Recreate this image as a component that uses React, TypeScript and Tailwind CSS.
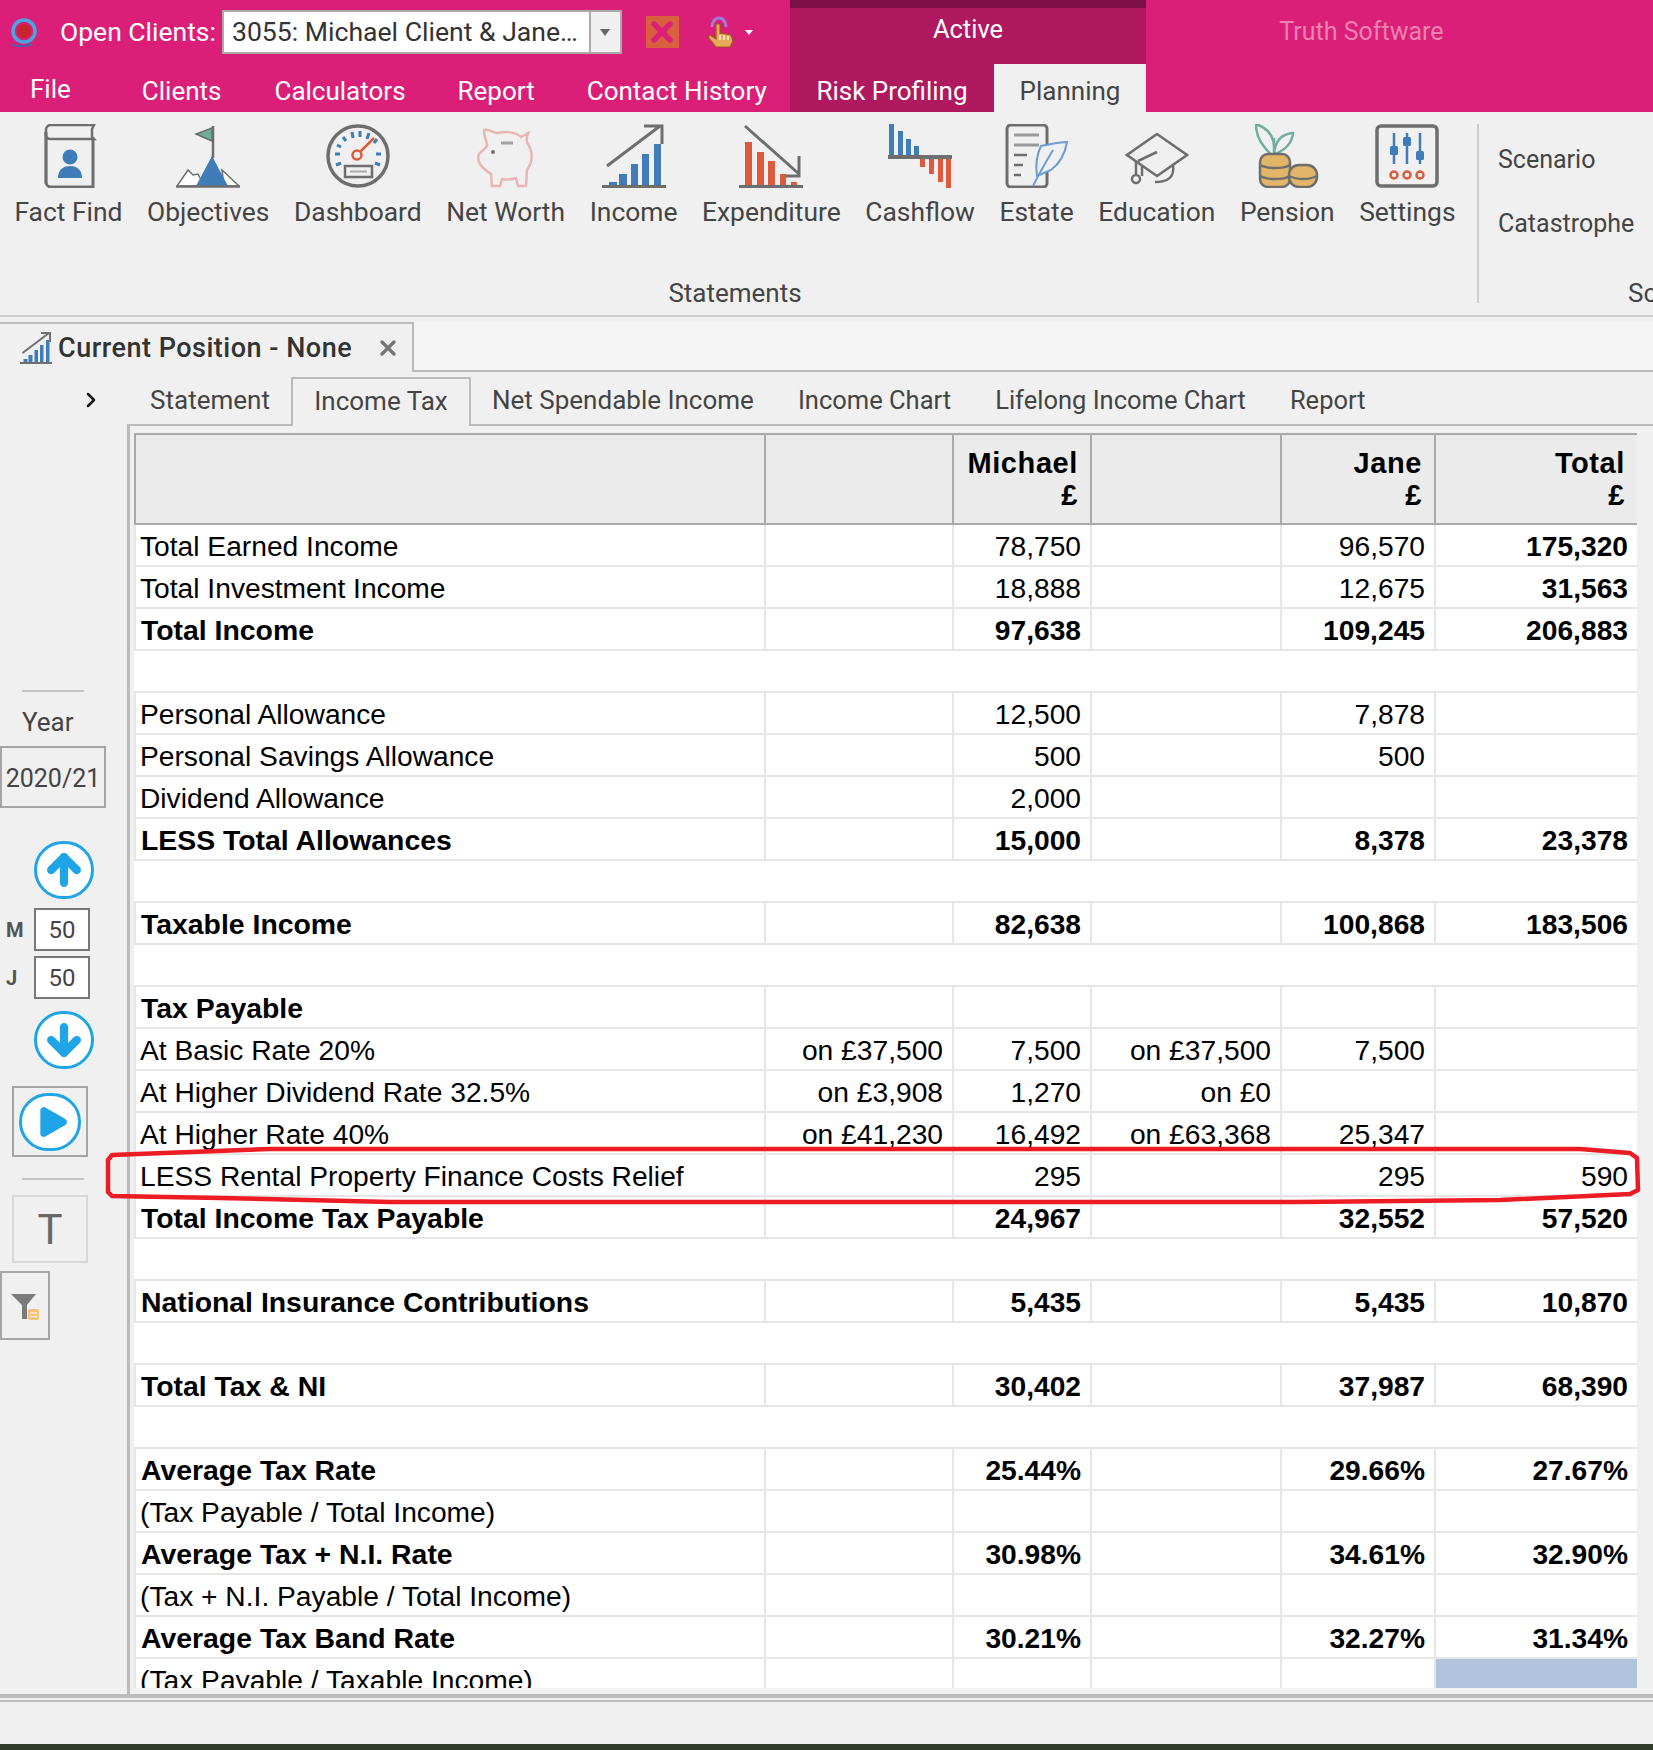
import { ArrowUp, ArrowDown, Play, X, ChevronRight } from "lucide-react";

const GRAY = "#6e6e6e";
const BLUE = "#3f7cb8";
const ORANGE = "#dd5b3c";
const TEAL = "#6fae9d";
const GOLD = "#e2b568";
const PINK = "#e8b6b4";

const FactFindIcon = () => (
  <svg width="64" height="64" viewBox="0 0 64 64" fill="none">
    <path d="M10 60 V6 a5 5 0 0 1 5 -5 H58 L56 5 V13 L58 15 H15 a5 5 0 0 1 -5 -7" stroke={GRAY} strokeWidth="2.5" />
    <path d="M57 14 V63 H15 a5 5 0 0 1 -5 -5 V8" stroke={GRAY} strokeWidth="3" />
    <circle cx="34" cy="33" r="7.5" fill={BLUE} />
    <path d="M22 54 C22 45 28 42 34 42 C40 42 46 45 46 54 Z" fill={BLUE} />
  </svg>
);

const ObjectivesIcon = () => (
  <svg width="64" height="64" viewBox="0 0 64 64" fill="none">
    <path d="M37 2 V34" stroke={GRAY} strokeWidth="2.5" />
    <path d="M36 4 L20 10 L36 17 Z" fill={TEAL} stroke={GRAY} strokeWidth="1.5" />
    <path d="M12 46 L1 62 H28 L22 50 L17 51 Z" fill="#fff" stroke={GRAY} strokeWidth="1.5" />
    <path d="M46 46 L63 62 H48 Z" fill="#fff" stroke={GRAY} strokeWidth="1.5" />
    <path d="M36 32 L20 62 H52 Z" fill={BLUE} />
    <path d="M0 62.5 H64" stroke={GRAY} strokeWidth="2.5" />
  </svg>
);

const DashboardIcon = () => (
  <svg width="64" height="64" viewBox="0 0 64 64" fill="none">
    <circle cx="32" cy="32" r="30" stroke={GRAY} strokeWidth="3.5" />
    <path d="M9 30 H14 M10 41 L15 39 M11 21 L15 23 M17 13 L20 17 M26 8 L27 14 M34 7 V13 M43 9 L41 15 M51 15 L48 19 M55 30 H50 M54 41 L49 39" stroke={BLUE} strokeWidth="3" />
    <circle cx="31" cy="31" r="4.5" stroke={ORANGE} strokeWidth="2.5" />
    <path d="M34 28 L48 14" stroke={ORANGE} strokeWidth="2.5" />
    <rect x="19" y="42" width="27" height="11" stroke={GRAY} strokeWidth="2.5" />
    <path d="M24 47.5 H41" stroke="#aaa" strokeWidth="2" />
  </svg>
);

const NetWorthIcon = () => (
  <svg width="64" height="64" viewBox="0 0 64 64" fill="none" stroke={PINK} strokeWidth="2.5">
    <path d="M10 6 C16 4 20 10 24 9 C32 7 42 8 47 13 L54 9 C52 14 53 18 53 18 C58 26 60 36 53 46 L52 62 H44 L42 54 C36 56 32 56 28 55 L26 62 H18 L17 50 C8 44 2 38 5 30 C8 26 14 24 13 20 C12 16 10 12 10 6 Z" />
    <path d="M27 19 H39" stroke={GRAY} strokeWidth="3" opacity="0.6" />
    <circle cx="19" cy="28" r="2" fill={GRAY} stroke="none" />
  </svg>
);

const IncomeIcon = () => (
  <svg width="64" height="64" viewBox="0 0 64 64" fill="none">
    <path d="M5 42 L58 2 M42 2 H60 V20" stroke={GRAY} strokeWidth="3" />
    <path d="M7 63 H15 V58 H7 Z M17 63 H25 V50 H17 Z M29 63 H36 V40 H29 Z M40 63 H47 V30 H40 Z M52 63 H59 V20 H52 Z" fill={BLUE} />
    <path d="M0 63 H64" stroke={GRAY} strokeWidth="4" />
  </svg>
);

const ExpenditureIcon = () => (
  <svg width="64" height="64" viewBox="0 0 64 64" fill="none">
    <path d="M6 2 L60 50 M60 32 V52 H42" stroke={GRAY} strokeWidth="3" />
    <path d="M6 63 H13 V18 H6 Z M18 63 H25 V28 H18 Z M29 63 H36 V37 H29 Z M41 63 H47 V50 H41 Z M52 63 H58 V58 H52 Z" fill={ORANGE} />
    <path d="M0 63 H64" stroke={GRAY} strokeWidth="4" />
  </svg>
);

const CashflowIcon = () => (
  <svg width="64" height="64" viewBox="0 0 64 64" fill="none">
    <path d="M1 0 H6 V31 H1 Z M10 7 H15 V31 H10 Z M18 15 H23 V31 H18 Z M26 22 H31 V31 H26 Z" fill={BLUE} />
    <path d="M32 35 H37 V43 H32 Z M41 35 H46 V50 H41 Z M50 35 H55 V58 H50 Z M58 35 H63 V64 H58 Z" fill={ORANGE} />
    <path d="M0 33 H64" stroke={GRAY} strokeWidth="4" />
  </svg>
);

const EstateIcon = () => (
  <svg width="64" height="64" viewBox="0 0 64 64" fill="none">
    <rect x="2" y="1" width="40" height="62" rx="4" stroke={GRAY} strokeWidth="3" />
    <path d="M9 11 H34 M9 21 H34" stroke="#9a9a9a" strokeWidth="3" />
    <path d="M9 31 H22 M9 41 H18 M9 51 H16" stroke={GRAY} strokeWidth="2.5" />
    <path d="M36 22 C46 20 54 18 62 18 C60 30 54 40 46 46 L32 52 C30 38 32 30 36 22 Z" fill="#f0f0f0" stroke="#6a9dd2" strokeWidth="2" />
    <path d="M28 62 C34 50 42 36 48 26" stroke="#6a9dd2" strokeWidth="2" />
  </svg>
);

const EducationIcon = () => (
  <svg width="64" height="64" viewBox="0 0 64 64" fill="none" stroke={GRAY} strokeWidth="2.5">
    <path d="M32 10 L62 31 L32 52 L2 31 Z" />
    <path d="M11 37 V50" />
    <circle cx="11" cy="55" r="4" />
    <path d="M32 28 L13 37 M17 42 V52 M48 41 C50 54 42 58 30 58" />
  </svg>
);

const PensionIcon = () => (
  <svg width="64" height="64" viewBox="0 0 64 64" fill="none">
    <path d="M19 34 V14 M19 34 C10 24 1 16 1 0 C12 4 20 12 19 26 M19 30 C20 18 26 10 38 9 C37 20 30 26 20 30" stroke={TEAL} strokeWidth="2.5" />
    <rect x="5" y="30" width="30" height="33" rx="8" fill={GOLD} stroke={GRAY} strokeWidth="2.5" />
    <path d="M5 41 C12 45 28 45 35 41 M5 52 C12 56 28 56 35 52" stroke={GRAY} strokeWidth="2.5" />
    <rect x="34" y="41" width="28" height="22" rx="10" fill={GOLD} stroke={GRAY} strokeWidth="2.5" />
    <path d="M34 52 C42 56 54 56 62 52" stroke={GRAY} strokeWidth="2.5" />
  </svg>
);

const SettingsIcon = () => (
  <svg width="64" height="64" viewBox="0 0 64 64" fill="none">
    <rect x="2" y="2" width="60" height="60" rx="4" stroke={GRAY} strokeWidth="3.5" />
    <path d="M19 9 V40 M32 9 V40 M45 9 V40" stroke={BLUE} strokeWidth="2.5" />
    <rect x="15" y="22" width="8" height="9" rx="1.5" fill={BLUE} />
    <rect x="28" y="13" width="8" height="9" rx="1.5" fill={BLUE} />
    <rect x="41" y="27" width="8" height="9" rx="1.5" fill={BLUE} />
    <circle cx="19" cy="51" r="3.5" stroke={ORANGE} strokeWidth="2.5" />
    <circle cx="32" cy="51" r="3.5" stroke={ORANGE} strokeWidth="2.5" />
    <circle cx="45" cy="51" r="3.5" stroke={ORANGE} strokeWidth="2.5" />
  </svg>
);

const ribbonItems = [
  { label: "Fact Find", icon: <FactFindIcon /> },
  { label: "Objectives", icon: <ObjectivesIcon /> },
  { label: "Dashboard", icon: <DashboardIcon /> },
  { label: "Net Worth", icon: <NetWorthIcon /> },
  { label: "Income", icon: <IncomeIcon /> },
  { label: "Expenditure", icon: <ExpenditureIcon /> },
  { label: "Cashflow", icon: <CashflowIcon /> },
  { label: "Estate", icon: <EstateIcon /> },
  { label: "Education", icon: <EducationIcon /> },
  { label: "Pension", icon: <PensionIcon /> },
  { label: "Settings", icon: <SettingsIcon /> },
];

type Row = {
  label?: string;
  bold?: boolean;
  onM?: string;
  m?: string;
  onJ?: string;
  j?: string;
  total?: string;
};

const rows: Row[] = [
  { label: "Total Earned Income", m: "78,750", j: "96,570", total: "175,320" },
  { label: "Total Investment Income", m: "18,888", j: "12,675", total: "31,563" },
  { label: "Total Income", bold: true, m: "97,638", j: "109,245", total: "206,883" },
  {},
  { label: "Personal Allowance", m: "12,500", j: "7,878" },
  { label: "Personal Savings Allowance", m: "500", j: "500" },
  { label: "Dividend Allowance", m: "2,000" },
  { label: "LESS Total Allowances", bold: true, m: "15,000", j: "8,378", total: "23,378" },
  {},
  { label: "Taxable Income", bold: true, m: "82,638", j: "100,868", total: "183,506" },
  {},
  { label: "Tax Payable", bold: true },
  { label: "At Basic Rate 20%", onM: "on £37,500", m: "7,500", onJ: "on £37,500", j: "7,500" },
  { label: "At Higher Dividend Rate 32.5%", onM: "on £3,908", m: "1,270", onJ: "on £0" },
  { label: "At Higher Rate 40%", onM: "on £41,230", m: "16,492", onJ: "on £63,368", j: "25,347" },
  { label: "LESS Rental Property Finance Costs Relief", m: "295", j: "295" },
  { label: "Total Income Tax Payable", bold: true, m: "24,967", j: "32,552", total: "57,520" },
  {},
  { label: "National Insurance Contributions", bold: true, m: "5,435", j: "5,435", total: "10,870" },
  {},
  { label: "Total Tax & NI", bold: true, m: "30,402", j: "37,987", total: "68,390" },
  {},
  { label: "Average Tax Rate", bold: true, m: "25.44%", j: "29.66%", total: "27.67%" },
  { label: "(Tax Payable / Total Income)" },
  { label: "Average Tax + N.I. Rate", bold: true, m: "30.98%", j: "34.61%", total: "32.90%" },
  { label: "(Tax + N.I. Payable / Total Income)" },
  { label: "Average Tax Band Rate", bold: true, m: "30.21%", j: "32.27%", total: "31.34%" },
  { label: "(Tax Payable / Taxable Income)" },
];

const cellCls = "border-2 border-[#e6e6e6] pt-[2px] pr-[9px] text-right";

const App = () => {
  return (
    <div className="relative flex h-[1750px] w-[1653px] flex-col overflow-hidden bg-[#f0f0f0] font-['Roboto',sans-serif] text-[#444]">
      {/* Title bar + menu */}
      <header className="flex h-[112px] shrink-0 bg-[#db1f78] text-[26px] text-white">
        <div className="w-[790px] shrink-0">
          <div className="flex h-[64px] items-center pl-[8px]">
            <svg width="30" height="30" viewBox="0 0 30 30" fill="none">
              <path d="M3 27 C8 30 18 30 24 27" stroke="#4a5fb0" strokeWidth="2" />
              <circle cx="16" cy="14" r="11" stroke="#4aa8e0" strokeWidth="3.5" />
              <circle cx="16" cy="14" r="7" fill="#c9252e" />
            </svg>
            <span className="ml-[22px] text-[26.5px]">Open Clients:</span>
            <div className="ml-[6px] flex h-[44px] w-[400px] items-center border-2 border-[#aaa] bg-white text-[#333]">
              <span className="flex-1 pl-[8px] text-[26.6px] whitespace-nowrap">3055: Michael Client &amp; Jane…</span>
              <div className="flex h-full w-[31px] shrink-0 items-center justify-center border-l-2 border-[#aaa] bg-[#f0f0f0]">
                <div className="h-0 w-0 border-x-[5px] border-t-[7px] border-x-transparent border-t-[#666]" />
              </div>
            </div>
            <div className="ml-[24px] flex h-[32px] w-[33px] items-center justify-center bg-[#d9603e]">
              <X size={32} strokeWidth={4} className="text-[#db1f78]" />
            </div>
            <svg className="ml-[26px]" width="30" height="34" viewBox="0 0 30 34" fill="none">
              <path d="M7 12 a7 9 0 0 1 14 0" stroke="#a07fd8" strokeWidth="3" />
              <path d="M11 9 H15 V18 L26 20 L28 26 L25 32 H11 L3 22 L5 20 L11 24 Z" fill="#e6a85a" stroke="#9a5a20" strokeWidth="1.2" />
              <path d="M15 20 V25 M19 20 V25 M23 21 V25" stroke="#fff3d8" strokeWidth="1.4" />
            </svg>
            <div className="ml-[10px] h-0 w-0 border-x-[4px] border-t-[5px] border-x-transparent border-t-white" />
          </div>
          <nav className="flex h-[48px] items-center pl-[30px] pt-[6px] text-[26px]">
            <span className="mr-[71px] -mt-[4px]">File</span>
            <span className="mr-[53px]">Clients</span>
            <span className="mr-[52px]">Calculators</span>
            <span className="mr-[52px]">Report</span>
            <span>Contact History</span>
          </nav>
        </div>
        <div className="flex w-[356px] shrink-0 flex-col bg-[#b01860]">
          <div className="h-[8px] bg-[#7d1046]" />
          <div className="flex h-[56px] items-center justify-center pb-[14px] text-[25.5px]">Active</div>
          <div className="flex h-[48px]">
            <div className="flex flex-1 items-center justify-center pt-[6px] text-[26px]">Risk Profiling</div>
            <div className="flex w-[152px] items-center justify-center bg-[#f0f0f0] pt-[6px] text-[#444]">Planning</div>
          </div>
        </div>
        <div className="flex h-[64px] flex-1 items-center justify-center pr-[76px] text-[25px] text-[#ee82b4]">Truth Software</div>
      </header>

      {/* Ribbon */}
      <section className="flex h-[205px] shrink-0 border-b-2 border-[#cdcdcd]">
        <div className="flex w-[1477px] shrink-0 flex-col items-center pr-[7px]">
          <div className="flex gap-[24.6px] pt-[12px] text-[26.4px]">
            {ribbonItems.map((item) => (
              <div key={item.label} className="flex flex-col items-center">
                {item.icon}
                <span className="mt-[8px] leading-[32px]">{item.label}</span>
              </div>
            ))}
          </div>
          <div className="mt-[49px] text-[26px] leading-[32px]">Statements</div>
        </div>
        <div className="mt-[12px] mb-[12px] flex-1 overflow-hidden border-l-2 border-[#cdcdcd] pl-[19px] text-[25px]">
          <div className="mt-[20px] leading-[32px]">Scenario</div>
          <div className="mt-[32px] leading-[32px]">Catastrophe</div>
          <div className="mt-[37px] whitespace-nowrap pl-[130px] text-[26px] leading-[32px]">Scenarios</div>
        </div>
      </section>

      {/* Document tab */}
      <div className="mt-[5px] flex h-[50px] shrink-0">
        <div className="flex w-[414px] items-center border-t-2 border-r-2 border-[#bbb] pl-[20px] text-[27px] font-medium tracking-[0.5px] text-[#333]">
          <svg width="32" height="32" viewBox="0 0 64 64" fill="none">
            <path d="M5 42 L58 2 M42 2 H60 V20" stroke={GRAY} strokeWidth="4" />
            <path d="M7 60 H15 V54 H7 Z M17 60 H25 V46 H17 Z M29 60 H36 V36 H29 Z M40 60 H47 V26 H40 Z M52 60 H59 V16 H52 Z" fill={BLUE} />
            <path d="M0 62 H64" stroke={GRAY} strokeWidth="4" />
          </svg>
          <span className="ml-[6px] whitespace-nowrap">Current Position - None</span>
          <X size={24} strokeWidth={3.5} className="ml-[24px] shrink-0 text-[#777]" />
        </div>
        <div className="flex-1 border-b-2 border-[#bbb] bg-[#f5f5f5]" />
      </div>

      {/* Sub tabs */}
      <div className="flex h-[54px] shrink-0 pt-[5px] text-[26px]">
        <div className="flex w-[127px] items-center justify-end pr-[24px] pb-[4px]">
          <ChevronRight size={24} strokeWidth={2.5} className="text-[#111]" />
        </div>
        <div className="flex w-[164px] items-center justify-center border-b-2 border-[#bbb] pl-[2px]">Statement</div>
        <div className="flex w-[180px] items-center justify-center border-x-2 border-t-2 border-[#bbb] pb-[2px]">Income Tax</div>
        <div className="flex flex-1 items-center gap-[44px] border-b-2 border-[#bbb] pl-[21px] text-[25.5px]">
          <span className="text-[26px]">Net Spendable Income</span>
          <span>Income Chart</span>
          <span>Lifelong Income Chart</span>
          <span>Report</span>
        </div>
      </div>

      {/* Body */}
      <div className="flex min-h-0 flex-1">
        <aside className="flex h-[1269px] w-[130px] shrink-0 flex-col border-r-[3px] border-[#bbb]">
          <div className="mt-[264px] ml-[22px] h-[2px] w-[62px] bg-[#c4c4c4]" />
          <div className="mt-[14px] pl-[22px] text-[26px] leading-[32px]">Year</div>
          <div className="mt-[8px] flex h-[62px] w-[106px] items-center justify-center border-2 border-[#a5a5a5] pt-[3px] text-[25px]">2020/21</div>
          <div className="mt-[33px] ml-[34px] flex h-[58px] w-[60px] items-center justify-center rounded-full border-[3px] border-[#1fa5e6] bg-white">
            <ArrowUp size={44} strokeWidth={4.5} className="text-[#1fa5e6]" />
          </div>
          <div className="mt-[9px] flex items-center">
            <span className="w-[34px] pl-[6px] text-[20px] font-bold text-[#555]">M</span>
            <div className="flex h-[43px] w-[56px] items-center justify-center border-2 border-[#777] bg-white text-[24px]">50</div>
          </div>
          <div className="mt-[5px] flex items-center">
            <span className="w-[34px] pl-[6px] text-[20px] font-bold text-[#555]">J</span>
            <div className="flex h-[43px] w-[56px] items-center justify-center border-2 border-[#777] bg-white text-[24px]">50</div>
          </div>
          <div className="mt-[12px] ml-[34px] flex h-[58px] w-[60px] items-center justify-center rounded-full border-[3px] border-[#1fa5e6] bg-white">
            <ArrowDown size={44} strokeWidth={4.5} className="text-[#1fa5e6]" />
          </div>
          <div className="mt-[17px] ml-[12px] flex h-[71px] w-[76px] items-center justify-center border-2 border-[#a5a5a5]">
            <div className="flex h-[58px] w-[62px] items-center justify-center rounded-full border-[3px] border-[#1fa5e6] bg-white">
              <Play size={40} fill="#1fa5e6" strokeWidth={0} className="ml-[4px] text-[#1fa5e6]" />
            </div>
          </div>
          <div className="mt-[21px] ml-[22px] h-[2px] w-[62px] bg-[#c4c4c4]" />
          <div className="mt-[15px] ml-[12px] flex h-[68px] w-[76px] items-center justify-center border-2 border-[#d8d8d8] text-[42px] text-[#666]">T</div>
          <div className="mt-[8px] flex h-[69px] w-[50px] items-center justify-center border-2 border-[#a5a5a5]">
            <svg width="30" height="30" viewBox="0 0 30 30">
              <path d="M1 3 H26 L17 14 V28 H12 V14 Z" fill="#7b7b7b" />
              <rect x="18" y="18" width="11" height="11" rx="2" fill="#f4c27a" />
              <path d="M20 22 H27 M20 25.5 H27" stroke="#fff" strokeWidth="1.2" />
            </svg>
          </div>
        </aside>

        <main className="min-w-0 flex-1">
          <div className="ml-[4px] mt-[7px] h-[1255px] w-[1503px] overflow-hidden">
            <table className="w-[1503px] table-fixed border-collapse bg-white font-['Liberation_Sans',sans-serif] text-[28.2px] leading-[30px] text-black">
              <colgroup>
                <col className="w-[630px]" />
                <col className="w-[188px]" />
                <col className="w-[138px]" />
                <col className="w-[190px]" />
                <col className="w-[154px]" />
                <col className="w-[203px]" />
              </colgroup>
              <thead>
                <tr className="h-[90px] bg-[#ebebeb] text-right text-[29px] leading-[32px] tracking-[0.6px]">
                  <th className="border-2 border-[#a9a9a9]" />
                  <th className="border-2 border-[#a9a9a9]" />
                  <th className="border-2 border-[#a9a9a9] pr-[12px] text-right font-bold">Michael<br />£</th>
                  <th className="border-2 border-[#a9a9a9]" />
                  <th className="border-2 border-[#a9a9a9] pr-[12px] text-right font-bold">Jane<br />£</th>
                  <th className="border-2 border-[#a9a9a9] pr-[12px] text-right font-bold">Total<br />£</th>
                </tr>
              </thead>
              <tbody>
                {rows.map((row, i) => {
                  if (!row.label) {
                    return (
                      <tr key={i} className="h-[42px]">
                        <td colSpan={6} />
                      </tr>
                    );
                  }
                  const last = i === rows.length - 1;
                  return (
                    <tr key={i} className={row.bold ? "h-[42px] font-bold" : "h-[42px]"}>
                      <td className={row.bold ? "border-2 border-[#e6e6e6] pt-[2px] pl-[5px] text-[28.4px] whitespace-nowrap" : "border-2 border-[#e6e6e6] pt-[2px] pl-[4px] whitespace-nowrap"}>{row.label}</td>
                      <td className={cellCls}>{row.onM}</td>
                      <td className={cellCls}>{row.m}</td>
                      <td className={cellCls}>{row.onJ}</td>
                      <td className={cellCls}>{row.j}</td>
                      {i === 15 ? (
                        <td className={cellCls}>590</td>
                      ) : (
                        <td className={last ? "border-2 border-[#e6e6e6] bg-[#b0c4de]" : cellCls + " font-bold"}>{row.total}</td>
                      )}
                    </tr>
                  );
                })}
              </tbody>
            </table>
          </div>
        </main>
      </div>

      {/* Footer */}
      <div className="h-[50px] shrink-0 border-t-4 border-[#bbb]">
        <div className="mt-[2px] h-[2px] bg-[#bbb]" />
      </div>
      <div className="h-[6px] shrink-0 bg-[#333b2b]" />

      {/* Red annotation around the rental relief row */}
      <svg className="pointer-events-none absolute left-[100px] top-[1140px]" width="1553" height="70" viewBox="0 0 1553 70" fill="none">
        <path d="M12 15 L170 9 L1480 9 L1530 13 L1537 18 L1538 50 L1530 54 L1400 60 L1200 62 L290 62 L120 58 L12 56 L8 52 L8 20 Z" stroke="#ed1c24" strokeWidth="4.5" strokeLinejoin="round" />
      </svg>
    </div>
  );
};

export default App;
